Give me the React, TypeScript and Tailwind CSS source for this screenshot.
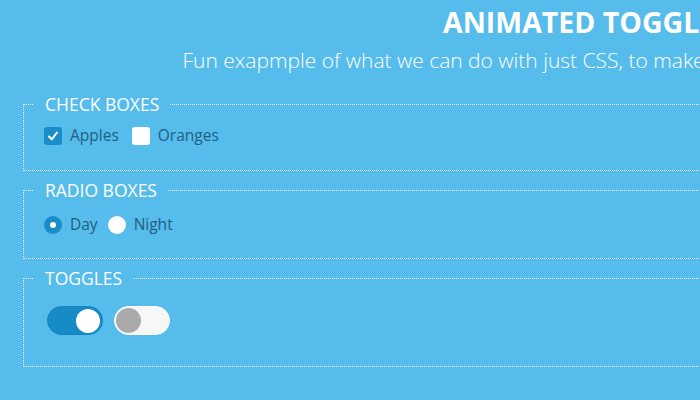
import React from 'react';

const font = { fontFamily: '"Open Sans", "Liberation Sans", sans-serif' };

const Group = ({ title, children, h }: { title: string; children: React.ReactNode; h: string }) => (
  <fieldset className={`border border-dotted border-white pl-[10px] ${h}`}>
    <legend className="pl-[11px] pr-[11px] text-[17.5px] leading-[22px] text-white">{title}</legend>
    <div className="pl-[10px]">{children}</div>
  </fieldset>
);

export default function App() {
  return (
    <div className="min-h-screen w-full overflow-hidden bg-[#55bcec]" style={font}>
      <div className="w-[1174px] px-[23px]">
        <header className="pt-[3px] text-center text-white">
          <h1 className="text-[28.5px] leading-[38px] font-bold">ANIMATED TOGGLES</h1>
          <p className="mt-[4px] text-[21px] leading-[30px] font-light">
            Fun exapmple of what we can do with just CSS, to make your form elements awesome
          </p>
        </header>

        <div className="mt-[18px] flex flex-col gap-[8px]">
          <Group title="CHECK BOXES" h="h-[78px]">
            <div className="mt-[9px] flex items-center gap-[13px] text-[15.5px] text-[#22607f]">
              <label className="flex items-center gap-[8px]">
                <span className="flex h-[18px] w-[18px] items-center justify-center rounded-[3px] bg-[#1a8dc8]">
                  <svg width="12" height="12" viewBox="0 0 12 12" fill="none">
                    <path d="M2 6.5 L4.8 9.3 L10 2.5" stroke="white" strokeWidth="2" strokeLinecap="round" strokeLinejoin="round" />
                  </svg>
                </span>
                Apples
              </label>
              <label className="flex items-center gap-[8px]">
                <span className="h-[18px] w-[18px] rounded-[3px] bg-white" />
                Oranges
              </label>
            </div>
          </Group>

          <Group title="RADIO BOXES" h="h-[80px]">
            <div className="mt-[12px] flex items-center gap-[10px] text-[15.5px] text-[#22607f]">
              <label className="flex items-center gap-[8px]">
                <span className="flex h-[18px] w-[18px] items-center justify-center rounded-full bg-[#1a8dc8]">
                  <span className="h-[6px] w-[6px] rounded-full bg-white" />
                </span>
                Day
              </label>
              <label className="flex items-center gap-[8px]">
                <span className="h-[18px] w-[18px] rounded-full bg-white" />
                Night
              </label>
            </div>
          </Group>

          <Group title="TOGGLES" h="h-[100px]">
            <div className="mt-[17px] flex items-center gap-[11px] pl-[3px]">
              <span className="flex h-[29px] w-[56px] items-center justify-end rounded-full border border-[#1483bd] bg-[#178bc6] pr-[2px]">
                <span className="h-[24px] w-[24px] rounded-full bg-white" />
              </span>
              <span className="flex h-[29px] w-[56px] items-center rounded-full border border-white bg-[#f7f7f7] pl-[1px]">
                <span className="h-[25px] w-[25px] rounded-full bg-[#aaaaaa]" />
              </span>
            </div>
          </Group>
        </div>
      </div>
    </div>
  );
}
